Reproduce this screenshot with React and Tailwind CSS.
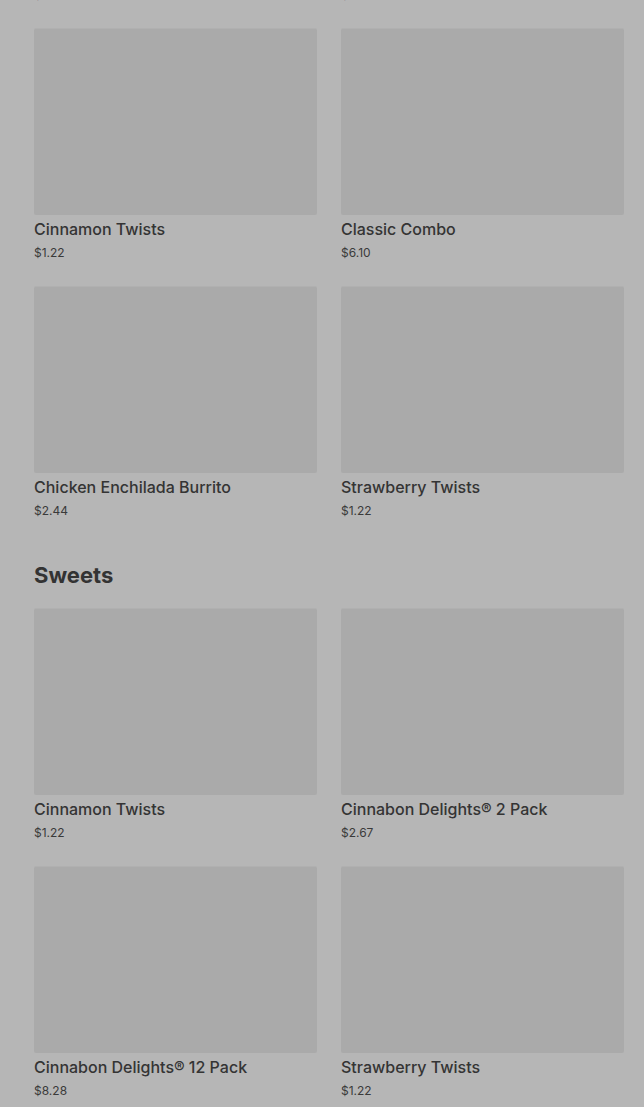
const sections = [
  {
    title: null,
    items: [
      { name: "Cheesy Roll Up", price: "$1.22" },
      { name: "Beefy 5-Layer Burrito", price: "$2.44" },
      { name: "Cinnamon Twists", price: "$1.22" },
      { name: "Classic Combo", price: "$6.10" },
      { name: "Chicken Enchilada Burrito", price: "$2.44" },
      { name: "Strawberry Twists", price: "$1.22" },
    ],
  },
  {
    title: "Sweets",
    items: [
      { name: "Cinnamon Twists", price: "$1.22" },
      { name: "Cinnabon Delights® 2 Pack", price: "$2.67" },
      { name: "Cinnabon Delights® 12 Pack", price: "$8.28" },
      { name: "Strawberry Twists", price: "$1.22" },
    ],
  },
];

function ItemCard({ item }) {
  return (
    <div className="flex flex-col">
      <div className="h-[187px] rounded-[2px] border-t border-[#b0b0b0] bg-[#aaaaaa]" />
      <div className="mt-[3px] text-[16px] font-medium leading-[22px] text-[#343434]">
        {item.name}
      </div>
      <div className="mt-[5px] text-[12px] leading-[16px] text-[#3a3a3a]">{item.price}</div>
    </div>
  );
}

export default function App() {
  return (
    <div
      className="min-h-screen overflow-hidden bg-[#b6b6b6] pl-[34px] pr-[20px]"
      style={{ fontFamily: "Inter, 'Noto Sans', sans-serif" }}
    >
      <div className="-mt-[230px] flex flex-col gap-[42px] pb-10">
        {sections.map((section, i) => (
          <div key={i}>
            {section.title && (
              <div className="mb-[19px] text-[22px] font-bold leading-[28px] text-[#333333]">
                {section.title}
              </div>
            )}
            <div className="grid grid-cols-2 gap-x-6 gap-y-[25px]">
              {section.items.map((item, j) => (
                <ItemCard key={j} item={item} />
              ))}
            </div>
          </div>
        ))}
      </div>
    </div>
  );
}
